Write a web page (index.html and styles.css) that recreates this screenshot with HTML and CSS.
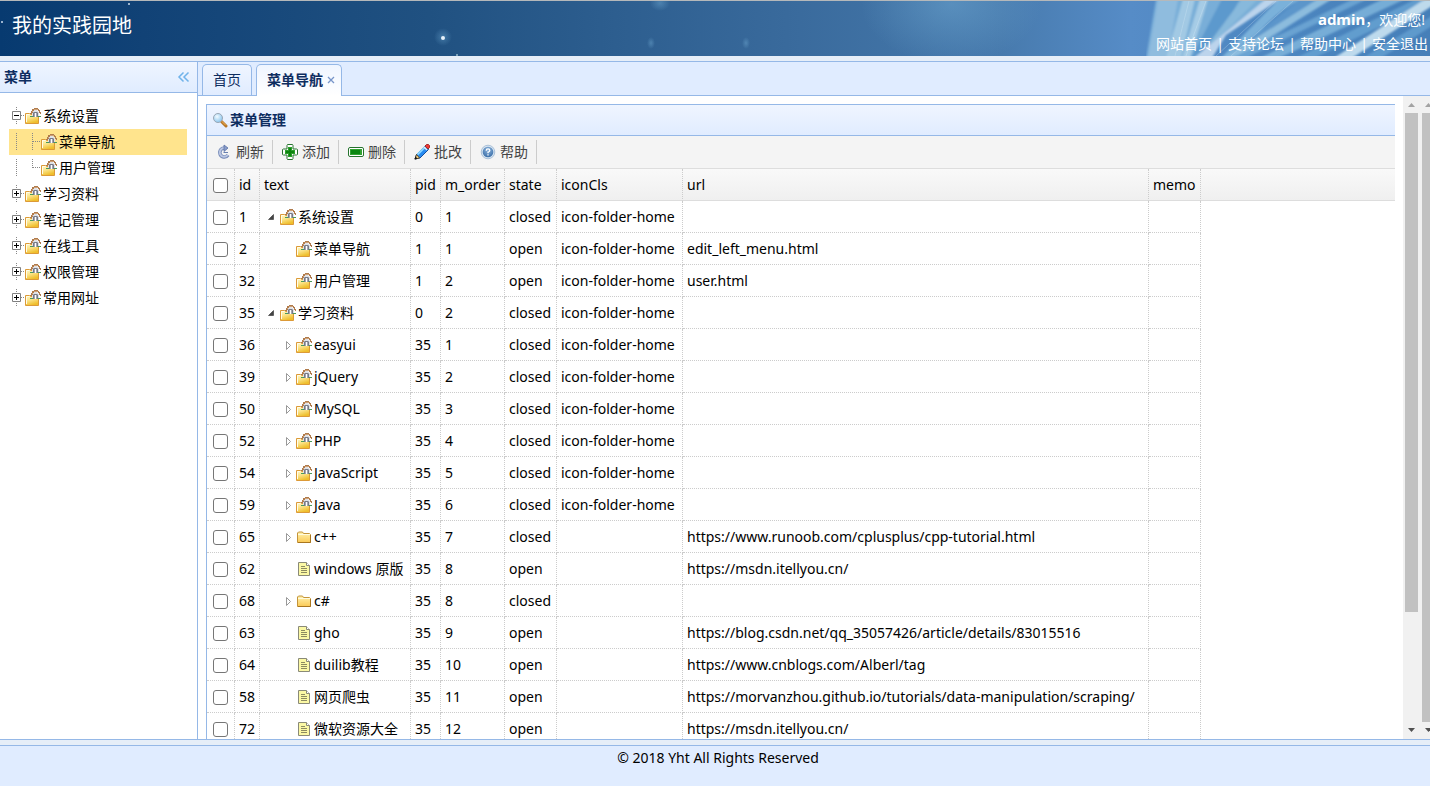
FILE: index.html
```html
<!DOCTYPE html>
<html lang="zh-CN">
<head>
<meta charset="utf-8">
<title>我的实践园地</title>
<link rel="stylesheet" href="styles.css">
</head>
<body>
<svg class="sprite" aria-hidden="true">
  <defs>
    <linearGradient id="gold" x1="0" y1="0" x2="0.4" y2="1"><stop offset="0" stop-color="#fffbd0"/><stop offset="0.5" stop-color="#fbe48a"/><stop offset="1" stop-color="#efbe2c"/></linearGradient>
    <linearGradient id="gold2" x1="0" y1="0" x2="0" y2="1"><stop offset="0" stop-color="#fff3b0"/><stop offset="1" stop-color="#fbc955"/></linearGradient>
    <radialGradient id="lens" cx="0.4" cy="0.35" r="0.7"><stop offset="0" stop-color="#f2fbff"/><stop offset="1" stop-color="#85c3ee"/></radialGradient>
    <radialGradient id="ball" cx="0.5" cy="0.3" r="0.7"><stop offset="0" stop-color="#8db4dc"/><stop offset="1" stop-color="#3a6ea8"/></radialGradient>
  </defs>
  <symbol id="home" viewBox="0 0 16 16">
    <path d="M.5 5.500h4l1 1h8v9h-13z" fill="url(#gold)" stroke="#dc9a38"/>
    <path d="M1.500 14V6.500h3" fill="none" stroke="#fffde8"/>
    <path d="M7 9V4l3.500-3L14 4v5z" fill="#dfe1e6"/>
    <path d="M8 4h5v5H8z" fill="#a3a6b0"/>
    <path d="M10 5h1v4h-1z" fill="#fff"/>
    <path d="M9 4h3v1H9zM8 5h1v4H8zM12 5h1v4h-1z" fill="#777a86"/>
    <path d="M7 1h2V0h4v1h1v1h1v2h1v2h-1V5h-1V3h-1V2H9v1H8v2H7v1H5V5h1V3h1z" fill="#b07b4c"/>
    <path d="M9 1h4v1H9zM7 3h1v1H7z" fill="#cda076"/>
    <path d="M5 8h3v1H5zM13 8h3v1h-3z" fill="#4a9a5a"/>
  </symbol>
  <symbol id="folder" viewBox="0 0 16 16">
    <path d="M1.500 13.500v-9.500l1-1h4l1 1.500h6l1 1v8z" fill="url(#gold2)" stroke="#c4943a"/>
    <path d="M2 5.500h12" stroke="#fffbe0"/>
    <path d="M2 13.500h12.500V6" fill="none" stroke="#a9761f"/>
  </symbol>
  <symbol id="file" viewBox="0 0 16 16">
    <path d="M2.500 1.500h8l3 3v10h-11z" fill="#fbf8a4" stroke="#8a8a78"/>
    <path d="M10.500 1.500v3h3" fill="#fff" stroke="#8a8a78"/>
    <path d="M5 5.500h4M5 7.500h6M5 9.500h6M5 11.500h6" stroke="#8c8a60"/>
  </symbol>
  <symbol id="open" viewBox="0 0 16 16"><path d="M4.500 10.500h5v-5z" fill="#444" stroke="#333" stroke-width=".6"/></symbol>
  <symbol id="shut" viewBox="0 0 16 16"><path d="M6.500 4.500v8l4-4z" fill="#fff" stroke="#999"/></symbol>
  <symbol id="minus" viewBox="0 0 16 18">
    <path d="M7.500 0v18M12 8.500h4" stroke="#888" stroke-dasharray="1 1"/>
    <path d="M3.500 4.500h8v8h-8z" fill="#fff" stroke="#808080"/><path d="M5 8.500h5" stroke="#000"/>
  </symbol>
  <symbol id="plus" viewBox="0 0 16 18">
    <path d="M7.500 0v18M12 8.500h4" stroke="#888" stroke-dasharray="1 1"/>
    <path d="M3.500 4.500h8v8h-8z" fill="#fff" stroke="#808080"/><path d="M5 8.500h5M7.500 6v5" stroke="#000"/>
  </symbol>
  <symbol id="line" viewBox="0 0 16 18"><path d="M7.500 0v18" stroke="#888" stroke-dasharray="1 1"/></symbol>
  <symbol id="join" viewBox="0 0 16 18"><path d="M7.500 0v18M8 8.500h8" stroke="#888" stroke-dasharray="1 1"/></symbol>
  <symbol id="bend" viewBox="0 0 16 18"><path d="M7.500 0v9M8 8.500h8" stroke="#888" stroke-dasharray="1 1"/></symbol>
  <symbol id="search" viewBox="0 0 16 16">
    <path d="m9.500 9.500 4.500 4.500" stroke="#b67626" stroke-width="3" stroke-linecap="round"/><path d="m10 9.500 3.500 3.500" stroke="#f3b65c" stroke-linecap="round"/>
    <circle cx="6" cy="6" r="4.500" fill="url(#lens)" stroke="#9aa7b5"/>
  </symbol>
  <symbol id="reload" viewBox="0 0 16 16">
    <path d="M12 11A4.500 4.500 0 1 1 8.500 4" fill="none" stroke="#7287b5" stroke-width="3.600"/>
    <path d="M11.700 11A4.400 4.400 0 1 1 8.500 4" fill="none" stroke="#b9c5e2" stroke-width="2"/>
    <path d="M8 1v6.500L12 4z" fill="#8a9dca" stroke="#5870a4" stroke-width=".8"/><path d="M7.500 8.500h4.500" stroke="#6880b0"/>
  </symbol>
  <symbol id="add" viewBox="0 0 16 16">
    <path d="M5.500.5h5l.5 1v3.500h3.500l1 .5v5l-1 .5H11v3.500l-.5 1h-5l-.5-1V11H1.500l-1-.5v-5l1-.5H5V1.500z" fill="#fff" stroke="#26732e"/>
    <path d="M6 3h4v3h3v4h-3v3H6v-3H3V6h3z" fill="#2aa02a"/><path d="M7 4h2v3h3v2H9v3H7V9H4V7h3z" fill="#0d830f"/>
  </symbol>
  <symbol id="remove" viewBox="0 0 16 16">
    <rect x=".5" y="3.500" width="15" height="9" rx="1.500" fill="#fff" stroke="#26732e"/>
    <path d="M2 5h12v6H2z" fill="#31a231"/><path d="M3 6h9v4H3z" fill="#0a8610"/>
  </symbol>
  <symbol id="edit" viewBox="0 0 16 16">
    <path d="M1 15 2.500 10.500 11 2l3.500 3.500-8.500 8.500z" fill="#268af0" stroke="#174e9b"/>
    <path d="M3.500 10.500 11 3" stroke="#8cd6ff" stroke-width="2"/>
    <path d="m11 2 1.500-1.500h2l1 1v2L14 5z" fill="#ef3b36" stroke="#a22a2a"/><path d="m10 3 3 3" stroke="#e9eef4" stroke-width="1.200"/>
    <path d="M1 15l1.500-4.500L5.500 14z" fill="#ffdb86" stroke="#5c482a"/><path d="m.5 15.500 1-3 2 2z" fill="#111"/>
  </symbol>
  <symbol id="help" viewBox="0 0 16 16">
    <circle cx="8" cy="8" r="6.800" fill="#d4e2ef" stroke="#9db8d3" stroke-width=".8"/><circle cx="8" cy="8" r="5.300" fill="url(#ball)"/>
    <path d="M6.200 6.700q0-1.800 1.800-1.800t1.800 1.500Q9.800 7.500 8 8.200V9.300M8 10.200v1.300" fill="none" stroke="#fff" stroke-width="1.300"/>
  </symbol>
  <symbol id="up" viewBox="0 0 17 17"><path d="M5 11h7L8.500 7z" fill="#a3a3a3"/></symbol>
  <symbol id="down" viewBox="0 0 17 17"><path d="M5 6h7l-3.500 4z" fill="#505050"/></symbol>
</svg>

<header class="banner">
  <svg class="sky" aria-hidden="true">
    <defs>
      <linearGradient id="skyFill"><stop offset="0" stop-color="#073a70"/><stop offset=".1" stop-color="#114276"/><stop offset=".3" stop-color="#205181"/><stop offset=".55" stop-color="#396a9c"/><stop offset=".7" stop-color="#477aad"/><stop offset=".79" stop-color="#568cc7"/><stop offset=".9" stop-color="#4c86c0"/><stop offset="1" stop-color="#467fb8"/></linearGradient>
      <radialGradient id="glow"><stop offset="0" stop-color="#78b3da" stop-opacity=".4"/><stop offset="1" stop-color="#78b3da" stop-opacity="0"/></radialGradient>
      <filter id="soft"><feGaussianBlur stdDeviation="1.300"/></filter>
    </defs>
    <rect width="100%" height="100%" fill="url(#skyFill)"/>
    <ellipse cx="66.500%" cy="3" rx="90" ry="60" fill="url(#glow)"/>
    <circle cx="443" cy="36" r="9" fill="url(#glow)"/><circle cx="443" cy="37" r="2" fill="#e8f2fa"/>
    <circle cx="2" cy="21" r="1" fill="#cde"/><circle cx="129" cy="3" r="1" fill="#cde"/><circle cx="457" cy="54" r="1" fill="#9bc"/>
    <ellipse cx="651" cy="42" rx="4" ry="6" fill="url(#glow)"/><ellipse cx="746" cy="42" rx="4" ry="6" fill="url(#glow)"/>
    <ellipse cx="660" cy="2" rx="10" ry="8" fill="url(#glow)"/>
  </svg>
  <svg class="rays" viewBox="0 0 284 55" aria-hidden="true">
    <g filter="url(#soft)" opacity=".85">
      <path d="M10-2h115L45 57H0z" fill="#80b5dc"/>
      <path d="M12-2h20L22 57H2z" fill="#9ac5e3"/>
      <path d="M37-2h12L35 57H20z" fill="#b0d5ea"/>
      <path d="M54-2h8L44 57h-8z" fill="#b5d8ec"/>
      <path d="M76-2h18L61 57H45z" fill="#5e9ccf"/>
      <path d="M96-2h16L70 40 52 57z" fill="#92c2e1"/>
      <path d="M120-2h14L80 34 66 57H48z" fill="#cfe2f4"/>
      <path d="M133-2 75 57h20Q118 17 155-2z" fill="#83b9df"/>
      <path d="M154-2h28L98 57H80z" fill="#5f99cd"/>
      <path d="M172-2h14L90 57H78z" fill="#98c6e3"/>
      <path d="M207-2h14L100 57H86z" fill="#6fa8d5"/>
      <path d="M237-2h22L133 57h-19z" fill="#7fb5dc"/>
      <path d="M270-2h14v4L168 57h-18z" fill="#66a2d2"/>
      <path d="M276 0 286-4v9L206 57h-18z" fill="#d3eaf6"/>
      <path d="M286 15v10L235 57h-18z" fill="#649fd0"/>
    </g>
    <path d="M60 0 40 55M43 0 29 55M130 0 70 55M147 0 85 55" stroke="#e5f3fa" stroke-opacity=".25" fill="none"/>
  </svg>
  <h1 class="site-name">我的实践园地</h1>
  <div class="account">
    <p class="welcome"><strong>admin</strong>，欢迎您!</p>
    <nav class="links"><a href="#">网站首页</a><span>|</span><a href="#">支持论坛</a><span>|</span><a href="#">帮助中心</a><span>|</span><a href="#">安全退出</a></nav>
  </div>
</header>

<div class="workspace">
  <aside class="side">
    <div class="side-head"><h2>菜单</h2>
      <button class="fold" aria-label="折叠菜单"><svg width="16" height="16" viewBox="0 0 16 16"><path d="M8.500 3.500 4 8l4.500 4.500M13.500 3.500 9 8l4.500 4.500" fill="none" stroke="#70b3ea" stroke-width="1.500"/></svg></button>
    </div>
    <ul class="tree">
      <li><a href="#"><svg class="branch"><use href="#minus"/></svg><svg class="ico"><use href="#home"/></svg>系统设置</a></li>
      <li><a href="#" class="selected"><svg class="branch"><use href="#line"/></svg><svg class="branch"><use href="#join"/></svg><svg class="ico"><use href="#home"/></svg>菜单导航</a></li>
      <li><a href="#"><svg class="branch"><use href="#line"/></svg><svg class="branch"><use href="#bend"/></svg><svg class="ico"><use href="#home"/></svg>用户管理</a></li>
      <li><a href="#"><svg class="branch"><use href="#plus"/></svg><svg class="ico"><use href="#home"/></svg>学习资料</a></li>
      <li><a href="#"><svg class="branch"><use href="#plus"/></svg><svg class="ico"><use href="#home"/></svg>笔记管理</a></li>
      <li><a href="#"><svg class="branch"><use href="#plus"/></svg><svg class="ico"><use href="#home"/></svg>在线工具</a></li>
      <li><a href="#"><svg class="branch"><use href="#plus"/></svg><svg class="ico"><use href="#home"/></svg>权限管理</a></li>
      <li><a href="#"><svg class="branch"><use href="#plus"/></svg><svg class="ico"><use href="#home"/></svg>常用网址</a></li>
    </ul>
  </aside>

  <main class="main">
    <div class="tabs">
      <button class="tab">首页</button>
      <div class="tab active"><button class="tab-name">菜单导航</button><button class="close" aria-label="关闭"><svg width="8" height="8" viewBox="0 0 8 8"><path d="m1 1 6 6M7 1 1 7" stroke="#7795c9" stroke-width="1.300"/></svg></button></div>
    </div>
    <div class="view">
      <section class="panel">
        <div class="panel-head"><svg class="ico"><use href="#search"/></svg><h2>菜单管理</h2></div>
        <div class="toolbar">
          <button><svg class="ico"><use href="#reload"/></svg>刷新</button>
          <button><svg class="ico"><use href="#add"/></svg>添加</button>
          <button><svg class="ico"><use href="#remove"/></svg>删除</button>
          <button><svg class="ico"><use href="#edit"/></svg>批改</button>
          <button><svg class="ico"><use href="#help"/></svg>帮助</button>
        </div>
        <div class="grid">
        <table>
          <colgroup><col class="c-check"><col class="c-id"><col class="c-text"><col class="c-pid"><col class="c-order"><col class="c-state"><col class="c-icon"><col class="c-url"><col class="c-memo"><col></colgroup>
          <thead><tr><th><input type="checkbox" aria-label="全选"></th><th>id</th><th>text</th><th>pid</th><th>m_order</th><th>state</th><th>iconCls</th><th>url</th><th>memo</th><th class="rest"></th></tr></thead>
          <tbody>
            <tr><td><input type="checkbox" aria-label="1"></td><td>1</td><td><span class="node"><svg class="arrow"><use href="#open"/></svg><svg class="ico"><use href="#home"/></svg>系统设置</span></td><td>0</td><td>1</td><td>closed</td><td>icon-folder-home</td><td></td><td></td></tr>
            <tr><td><input type="checkbox" aria-label="2"></td><td>2</td><td><span class="node child leaf"><svg class="ico"><use href="#home"/></svg>菜单导航</span></td><td>1</td><td>1</td><td>open</td><td>icon-folder-home</td><td>edit_left_menu.html</td><td></td></tr>
            <tr><td><input type="checkbox" aria-label="32"></td><td>32</td><td><span class="node child leaf"><svg class="ico"><use href="#home"/></svg>用户管理</span></td><td>1</td><td>2</td><td>open</td><td>icon-folder-home</td><td>user.html</td><td></td></tr>
            <tr><td><input type="checkbox" aria-label="35"></td><td>35</td><td><span class="node"><svg class="arrow"><use href="#open"/></svg><svg class="ico"><use href="#home"/></svg>学习资料</span></td><td>0</td><td>2</td><td>closed</td><td>icon-folder-home</td><td></td><td></td></tr>
            <tr><td><input type="checkbox" aria-label="36"></td><td>36</td><td><span class="node child"><svg class="arrow"><use href="#shut"/></svg><svg class="ico"><use href="#home"/></svg>easyui</span></td><td>35</td><td>1</td><td>closed</td><td>icon-folder-home</td><td></td><td></td></tr>
            <tr><td><input type="checkbox" aria-label="39"></td><td>39</td><td><span class="node child"><svg class="arrow"><use href="#shut"/></svg><svg class="ico"><use href="#home"/></svg>jQuery</span></td><td>35</td><td>2</td><td>closed</td><td>icon-folder-home</td><td></td><td></td></tr>
            <tr><td><input type="checkbox" aria-label="50"></td><td>50</td><td><span class="node child"><svg class="arrow"><use href="#shut"/></svg><svg class="ico"><use href="#home"/></svg>MySQL</span></td><td>35</td><td>3</td><td>closed</td><td>icon-folder-home</td><td></td><td></td></tr>
            <tr><td><input type="checkbox" aria-label="52"></td><td>52</td><td><span class="node child"><svg class="arrow"><use href="#shut"/></svg><svg class="ico"><use href="#home"/></svg>PHP</span></td><td>35</td><td>4</td><td>closed</td><td>icon-folder-home</td><td></td><td></td></tr>
            <tr><td><input type="checkbox" aria-label="54"></td><td>54</td><td><span class="node child"><svg class="arrow"><use href="#shut"/></svg><svg class="ico"><use href="#home"/></svg>JavaScript</span></td><td>35</td><td>5</td><td>closed</td><td>icon-folder-home</td><td></td><td></td></tr>
            <tr><td><input type="checkbox" aria-label="59"></td><td>59</td><td><span class="node child"><svg class="arrow"><use href="#shut"/></svg><svg class="ico"><use href="#home"/></svg>Java</span></td><td>35</td><td>6</td><td>closed</td><td>icon-folder-home</td><td></td><td></td></tr>
            <tr><td><input type="checkbox" aria-label="65"></td><td>65</td><td><span class="node child"><svg class="arrow"><use href="#shut"/></svg><svg class="ico"><use href="#folder"/></svg>c++</span></td><td>35</td><td>7</td><td>closed</td><td></td><td>https://www.runoob.com/cplusplus/cpp-tutorial.html</td><td></td></tr>
            <tr><td><input type="checkbox" aria-label="62"></td><td>62</td><td><span class="node child leaf"><svg class="ico"><use href="#file"/></svg>windows 原版</span></td><td>35</td><td>8</td><td>open</td><td></td><td>https://msdn.itellyou.cn/</td><td></td></tr>
            <tr><td><input type="checkbox" aria-label="68"></td><td>68</td><td><span class="node child"><svg class="arrow"><use href="#shut"/></svg><svg class="ico"><use href="#folder"/></svg>c#</span></td><td>35</td><td>8</td><td>closed</td><td></td><td></td><td></td></tr>
            <tr><td><input type="checkbox" aria-label="63"></td><td>63</td><td><span class="node child leaf"><svg class="ico"><use href="#file"/></svg>gho</span></td><td>35</td><td>9</td><td>open</td><td></td><td>https://blog.csdn.net/qq_35057426/article/details/83015516</td><td></td></tr>
            <tr><td><input type="checkbox" aria-label="64"></td><td>64</td><td><span class="node child leaf"><svg class="ico"><use href="#file"/></svg>duilib教程</span></td><td>35</td><td>10</td><td>open</td><td></td><td>https://www.cnblogs.com/Alberl/tag</td><td></td></tr>
            <tr><td><input type="checkbox" aria-label="58"></td><td>58</td><td><span class="node child leaf"><svg class="ico"><use href="#file"/></svg>网页爬虫</span></td><td>35</td><td>11</td><td>open</td><td></td><td>https://morvanzhou.github.io/tutorials/data-manipulation/scraping/</td><td></td></tr>
            <tr><td><input type="checkbox" aria-label="72"></td><td>72</td><td><span class="node child leaf"><svg class="ico"><use href="#file"/></svg>微软资源大全</span></td><td>35</td><td>12</td><td>open</td><td></td><td>https://msdn.itellyou.cn/</td><td></td></tr>
          </tbody>
        </table>
        </div>
      </section>
      <div class="scroll"><svg class="step"><use href="#up"/></svg><div class="track"><div class="thumb inner"></div></div><svg class="step"><use href="#down"/></svg></div>
      <div class="outer-edge"><div class="scroll"><svg class="step"><use href="#up"/></svg><div class="track"><div class="thumb outer"></div></div><svg class="step"><use href="#down"/></svg></div></div>
    </div>
  </main>
</div>
<footer class="foot">© 2018 Yht All Rights Reserved</footer>
</body>
</html>
```
FILE: styles.css
```css
* { box-sizing: border-box; }
body {
  margin: 0;
  height: 100vh;
  display: flex;
  flex-direction: column;
  overflow: hidden;
  background: #e6eef8;
  color: #000;
  font: 14px/20px "Noto Sans", "Noto Sans CJK SC", sans-serif;
}
h1, h2, p, ul { margin: 0; padding: 0; }
h2 { font-size: 14px; line-height: 20px; color: #0e2d5f; }
a { color: inherit; text-decoration: none; }
button { border: 0; padding: 0; background: none; font: inherit; color: inherit; }
svg { display: block; flex: none; }
.sprite { position: absolute; width: 0; height: 0; }
.ico { width: 16px; height: 16px; }

.banner {
  position: relative;
  flex: none;
  height: 56px;
  border-top: 1px solid #b5b8ba;
  display: flex;
  justify-content: space-between;
  overflow: hidden;
  color: #fff;
}
.sky { position: absolute; top: 0; left: 0; width: 100%; height: 100%; }
.rays { position: absolute; top: 0; right: 0; width: 284px; height: 55px; }
.site-name { position: relative; padding: 11px 12px; font-size: 20px; line-height: 28px; font-weight: 400; }
.account { position: relative; padding: 7px 2px 0 0; text-align: right; }
.welcome { height: 24px; padding-right: 3px; line-height: 23px; }
.welcome strong { font-size: 15px; line-height: 20px; }
.links { display: flex; justify-content: flex-end; line-height: 24px; }
.links span { width: 16px; text-align: center; }

.workspace { flex: 1; min-height: 0; margin: 5px 0; display: flex; border-top: 1px solid #95b8e7; border-bottom: 1px solid #95b8e7; }
.side { flex: none; width: 198px; background: #fff; border-right: 1px solid #95b8e7; }
.side-head {
  height: 31px;
  padding: 0 6px 0 4px;
  display: flex;
  align-items: center;
  justify-content: space-between;
  border-bottom: 1px solid #95b8e7;
  background: linear-gradient(#eff5ff, #e0ecff);
}
.tree { list-style: none; padding: 10px 10px 0 9px; }
.tree a { display: flex; align-items: center; height: 26px; }
.tree .selected { background: #ffe48d; }
.branch { width: 16px; height: 18px; }
.tree .ico, .node .ico { margin-right: 2px; }

.main { flex: 1; min-width: 0; display: flex; flex-direction: column; background: #fff; }
.tabs { flex: none; height: 34px; padding: 2px 4px 0; display: flex; gap: 4px; background: #e0ecff; border-bottom: 1px solid #95b8e7; }
.tab {
  height: 31px;
  padding: 0 10px;
  display: flex;
  align-items: center;
  border: 1px solid #95b8e7;
  border-bottom: 0;
  border-radius: 5px 5px 0 0;
  background: linear-gradient(#eff5ff, #e0ecff);
  color: #0e2d5f;
}
.tab.active { height: 32px; padding: 0 6px 2px 10px; gap: 4px; background: linear-gradient(#eff5ff, #fff); font-weight: 700; }

.view { flex: 1; min-height: 0; display: flex; overflow: hidden; }
.panel { flex: 1; min-width: 0; margin: 8px 8px 0; border: 1px solid #95b8e7; border-width: 1px 0 0 1px; overflow: hidden; }
.panel-head { height: 31px; padding: 0 5px; display: flex; align-items: center; gap: 2px; border-bottom: 1px solid #95b8e7; background: linear-gradient(#eff5ff, #e0ecff); }
.toolbar { height: 33px; display: flex; align-items: center; background: #f4f4f4; border-bottom: 1px solid #ddd; color: #444; }
.toolbar button { height: 24px; padding: 0 8px 0 9px; display: flex; align-items: center; gap: 4px; border-right: 1px solid #ccc; }

table { width: 100%; table-layout: fixed; border-collapse: separate; border-spacing: 0; }
.c-check { width: 28px; }
.c-id { width: 25px; }
.c-text { width: 151px; }
.c-pid { width: 30px; }
.c-order { width: 64px; }
.c-state { width: 52px; }
.c-icon { width: 126px; }
.c-url { width: 466px; }
.c-memo { width: 52px; }
th, td { height: 32px; padding: 0 0 0 4px; border-right: 1px dotted #ccc; border-bottom: 1px dotted #ccc; text-align: left; font-weight: 400; white-space: nowrap; }
thead { background: linear-gradient(#f9f9f9, #efefef); }
th { border-bottom: 1px solid #ddd; }
th.rest { border-right: 0; }
th:first-child, td:first-child { padding: 1px 0 0 6px; }
input[type="checkbox"] { display: block; appearance: none; width: 15px; height: 15px; margin: 0; border: 1px solid #767676; border-radius: 3px; background: #fff; }
.node { display: flex; align-items: center; }
.child { padding-left: 16px; }
.leaf { padding-left: 32px; }
.arrow { width: 16px; height: 16px; }

.scroll { flex: none; width: 17px; height: 100%; display: flex; flex-direction: column; background: #f1f1f1; }
.step { width: 17px; height: 17px; }
.track { flex: 1; padding: 0 2px; }
.thumb { background: #c1c1c1; }
.inner { height: 82%; }
.outer { height: 100%; }
.outer-edge { flex: none; width: 10px; overflow: hidden; }

.foot { flex: none; height: 41px; padding: 2px 0 0 6px; background: #e0ecff; border-top: 1px solid #95b8e7; text-align: center; }
```
